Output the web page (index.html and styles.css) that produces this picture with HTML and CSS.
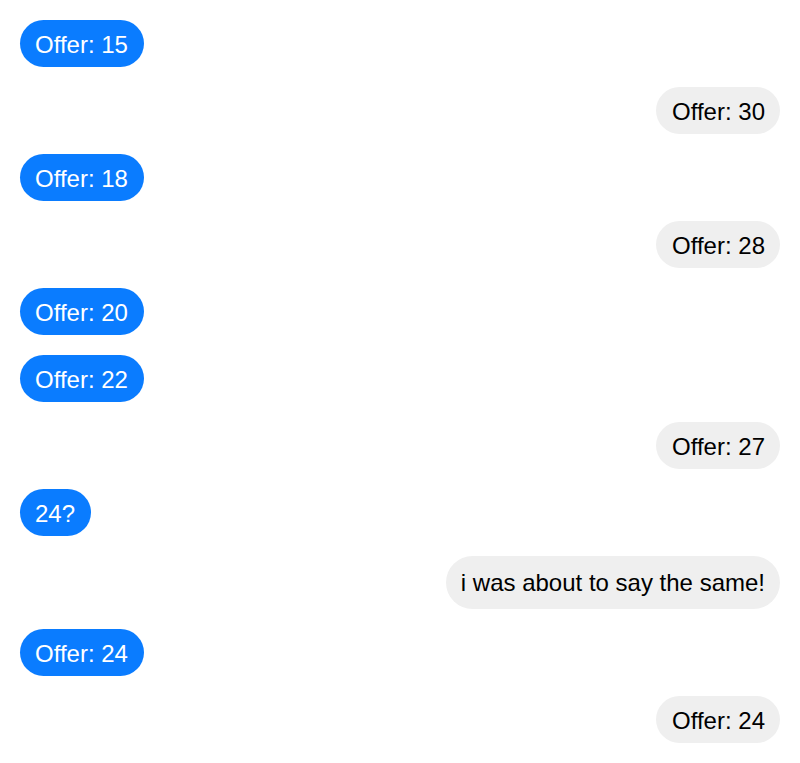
FILE: index.html
```html
<!DOCTYPE html>
<html>
<head>
<meta charset="utf-8">
<link rel="stylesheet" href="styles.css">
</head>
<body>
<div class="chat">
  <div class="msg them">Offer: 15</div>
  <div class="msg me">Offer: 30</div>
  <div class="msg them">Offer: 18</div>
  <div class="msg me">Offer: 28</div>
  <div class="msg them">Offer: 20</div>
  <div class="msg them">Offer: 22</div>
  <div class="msg me">Offer: 27</div>
  <div class="msg them">24?</div>
  <div class="msg me tall">i was about to say the same!</div>
  <div class="msg them">Offer: 24</div>
  <div class="msg me">Offer: 24</div>
</div>
</body>
</html>
```
FILE: styles.css
```css
html, body {
  margin: 0;
  padding: 0;
  background: #ffffff;
}
.chat {
  display: flex;
  flex-direction: column;
  gap: 20px;
  padding: 20px;
  font-family: "Liberation Sans", Arial, sans-serif;
  font-size: 24px;
}
.msg {
  padding: 11px 15px 9px 15px;
  line-height: 27px;
  border-radius: 24px;
  white-space: nowrap;
}
.them {
  align-self: flex-start;
  background: #0a7cff;
  color: #ffffff;
  padding-right: 16px;
}
.me {
  align-self: flex-end;
  background: #efefef;
  color: #000000;
  padding-left: 16px;
}
.tall {
  padding: 13px 15px;
  border-radius: 27px;
}
```
